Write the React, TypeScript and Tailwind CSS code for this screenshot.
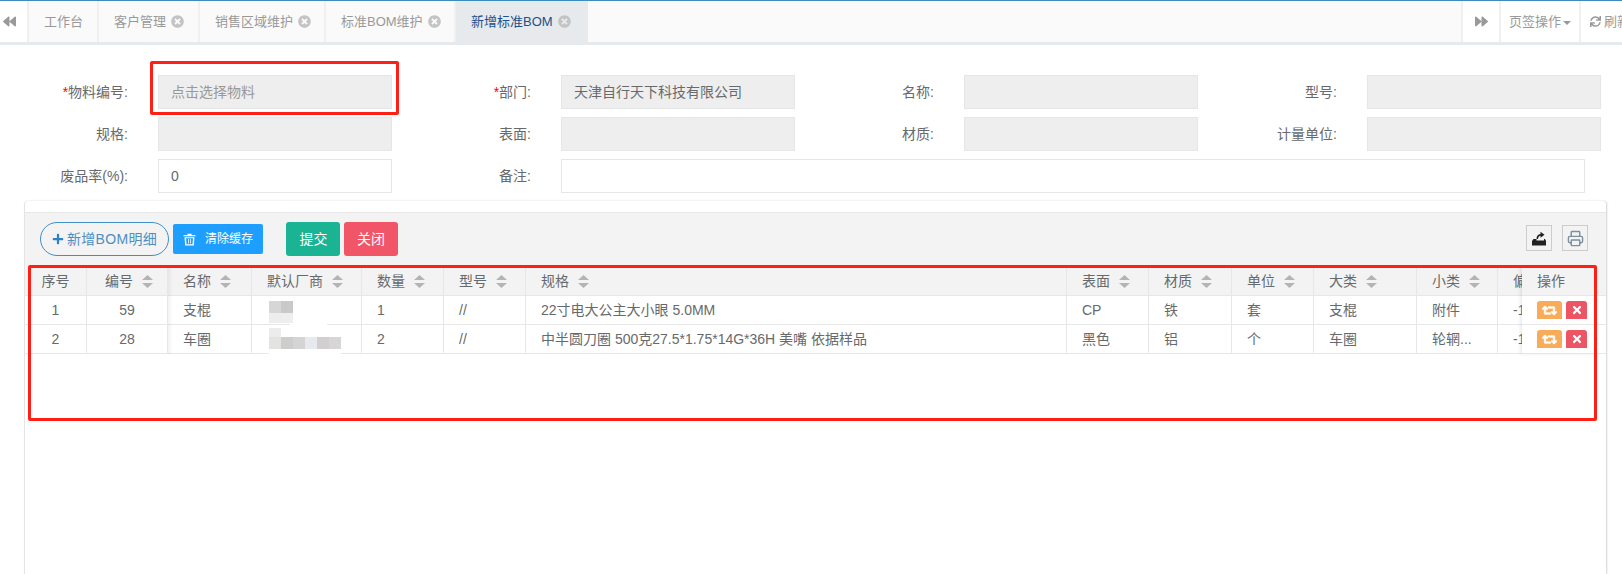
import { FaBackward, FaForward, FaPlus, FaRetweet, FaSync, FaTimes, FaTimesCircle } from "react-icons/fa";
import { Printer } from "lucide-react";

const tabs = [
  { name: "工作台", width: "w-[70px]", closable: false },
  { name: "客户管理", width: "w-[101px]", closable: true },
  { name: "销售区域维护", width: "w-[126px]", closable: true },
  { name: "标准BOM维护", width: "w-[130px]", closable: true },
];

const columns = [
  { title: "序号", width: 62, center: true, sort: false },
  { title: "编号", width: 81, center: true, sort: true },
  { title: "名称", width: 84, sort: true },
  { title: "默认厂商", width: 110, sort: true },
  { title: "数量", width: 82, sort: true },
  { title: "型号", width: 82, sort: true },
  { title: "规格", width: 541, sort: true },
  { title: "表面", width: 82, sort: true },
  { title: "材质", width: 83, sort: true },
  { title: "单位", width: 82, sort: true },
  { title: "大类", width: 103, sort: true },
  { title: "小类", width: 81, sort: true },
  { title: "偏差", width: 108, sort: false },
];

const rows = [
  ["1", "59", "支棍", "", "1", "//", "22寸电大公主大小眼 5.0MM", "CP", "铁", "套", "支棍", "附件", "-1"],
  ["2", "28", "车圈", "", "2", "//", "中半圆刀圈 500克27.5*1.75*14G*36H 美嘴 依据样品", "黑色", "铝", "个", "车圈", "轮辋...", "-1"],
];

function Field({ label, required, value, placeholder, editable }: { label: string; required?: boolean; value?: string; placeholder?: string; editable?: boolean }) {
  return (
    <div className="flex items-center">
      <label className="w-[100px] text-right text-[14px] leading-none text-[#676a6c]">
        {required && <span className="text-[#ff0000]">*</span>}
        {label}:
      </label>
      <div
        className={`ml-[30px] flex h-[34px] w-[234px] items-center border border-[#e5e6e7] px-3 text-[14px] ${
          editable ? "bg-white" : "bg-[#eeeeee]"
        } ${placeholder ? "text-[#999999]" : "text-[#676a6c]"}`}
      >
        {value || placeholder}
      </div>
    </div>
  );
}

function SortCaret() {
  return (
    <svg width="11" height="13" viewBox="0 0 11 13" className="ml-[9px] shrink-0">
      <path d="M5.5 0 L11 5 L0 5 Z M0 8 L11 8 L5.5 13 Z" fill="#b4b4b4" />
    </svg>
  );
}

function ExportIcon() {
  return (
    <svg width="14" height="15" viewBox="0 0 14 15">
      <path d="M0 14.5 V10 L1.5 8 H4.5 V9.5 H12 V8 H13 L14 10 V14.5 Z" fill="#222222" />
      <path d="M4.5 8 C4.5 5 5.8 3.3 8.5 3 V0.8 L12.5 3.8 L8.5 6.8 V4.8 C7 5 6.2 6 6 8 Z" fill="#222222" />
    </svg>
  );
}

function TrashIcon() {
  return (
    <svg width="13" height="13" viewBox="0 0 13 13" className="mr-[9px] shrink-0">
      <path d="M0.5 2 H4.5 V0.7 H8.5 V2 H12.5 V3.3 H0.5 Z" fill="#ffffff" />
      <path d="M1.5 4.3 H11.5 L10.8 12.5 H2.2 Z M3 5.3 L3.5 11.3 H9.5 L10 5.3 Z" fill="#ffffff" fillRule="evenodd" />
      <path d="M5 6 H5.8 V10.6 H5 Z M7.2 6 H8 V10.6 H7.2 Z" fill="#ffffff" />
    </svg>
  );
}

export default function App() {
  return (
    <div className="relative h-[574px] w-[1622px] overflow-hidden bg-white font-['Liberation_Sans','Noto_Sans_CJK_SC',sans-serif]">
      <div className="flex h-[45px] border-t border-t-[#3c8dbc] border-b-[3px] border-b-[#e7eaec] bg-[#fafafa] text-[13px] text-[#999999]">
        <div className="flex w-[29px] shrink-0 items-center border-r-2 border-[#f0f0f0] bg-white pl-[3px] text-[#999999]">
          <FaBackward size={13} />
        </div>
        {tabs.map((tab) => (
          <div key={tab.name} className={`flex shrink-0 items-center border-r-2 border-[#f0f0f0] pl-[15px] ${tab.width}`}>
            {tab.name}
            {tab.closable && <FaTimesCircle size={13} className="ml-[5px] text-[#c4c4c4]" />}
          </div>
        ))}
        <div className="flex w-[132px] shrink-0 items-center bg-[#e7eaec] pl-[15px] text-[#20508c]">
          新增标准BOM
          <FaTimesCircle size={13} className="ml-[5px] text-[#c4c4c4]" />
        </div>
        <div className="flex-1" />
        <div className="flex w-[40px] shrink-0 items-center justify-center border-x-2 border-[#f0f0f0] bg-white">
          <FaForward size={13} />
        </div>
        <div className="flex w-[80px] shrink-0 items-center justify-center border-r-2 border-[#f0f0f0] bg-white">
          页签操作
          <span className="ml-[2px] mt-[2px] border-x-[4px] border-t-[4px] border-x-transparent border-t-[#999999]" />
        </div>
        <div className="flex max-w-[41px] flex-1 items-center overflow-hidden whitespace-nowrap bg-white pl-[9px]">
          <FaSync size={11} className="mr-[3px] shrink-0" />
          刷新
        </div>
      </div>

      <div className="grid grid-cols-[repeat(4,403px)] gap-y-2 pl-[28px] pt-[30px]">
        <Field label="物料编号" required placeholder="点击选择物料" />
        <Field label="部门" required value="天津自行天下科技有限公司" />
        <Field label="名称" />
        <Field label="型号" />
        <Field label="规格" />
        <Field label="表面" />
        <Field label="材质" />
        <Field label="计量单位" />
        <Field label="废品率(%)" value="0" editable />
        <div className="col-span-3 flex items-center">
          <label className="w-[100px] text-right text-[14px] leading-none text-[#676a6c]">备注:</label>
          <div className="ml-[30px] h-[34px] w-[1024px] border border-[#e5e6e7] bg-white" />
        </div>
      </div>

      <div className="ml-[24px] mt-2 h-[373px] w-[1582px] rounded-t-[4px] border-l border-[#e4e4e4] bg-white shadow-[1px_0_2px_rgba(0,0,0,0.18)]">
        <div className="h-[11px]" />
        <div className="flex h-[55px] items-start border-t border-[#e7e7e7] bg-[#f3f3f3] pl-[15px] pr-[18px] pt-[9px]">
          <button className="flex h-[34px] w-[129px] items-center justify-center rounded-full border border-[#3f8fc9] text-[14px] tracking-[0.3px] text-[#4b8fc2]">
            <FaPlus size={12} className="mr-[3px] text-[#2b83c5]" />
            新增BOM明细
          </button>
          <button className="ml-[4px] mt-[2px] flex h-[30px] w-[90px] items-center justify-center rounded-[2px] bg-[#1e9fff] text-[12px] text-white">
            <TrashIcon />
            清除缓存
          </button>
          <button className="ml-[23px] h-[34px] w-[54px] rounded-[3px] bg-[#1ab394] pl-[1px] text-[14px] text-white">提交</button>
          <button className="ml-[4px] h-[34px] w-[54px] rounded-[3px] bg-[#f05668] text-[14px] text-white">关闭</button>
          <button className="ml-auto mt-[3px] flex h-[26px] w-[26px] items-center justify-center border border-[#cccccc]">
            <ExportIcon />
          </button>
          <button className="ml-[10px] mt-[3px] flex h-[26px] w-[26px] items-center justify-center border border-[#cccccc]">
            <Printer size={17} strokeWidth={2} className="text-[#7d8e9d]" />
          </button>
        </div>

        <div className="relative">
          <table className="w-[1581px] table-fixed border-separate border-spacing-0 text-[14px] text-[#676a6c]">
            <colgroup>
              {columns.map((col) => (
                <col key={col.title} style={{ width: col.width }} />
              ))}
            </colgroup>
            <thead>
              <tr>
                {columns.map((col) => (
                  <th key={col.title} className="h-[29px] overflow-hidden border-b border-r border-[#e7e7e7] bg-[#f3f3f3] px-[15px] font-normal last:border-r-0">
                    <div className={`flex items-center whitespace-nowrap ${col.center ? "justify-center" : ""} ${col.center && col.sort ? "pl-[4px]" : ""}`}>
                      {col.title}
                      {col.sort && <SortCaret />}
                    </div>
                  </th>
                ))}
              </tr>
            </thead>
            <tbody>
              {rows.map((row) => (
                <tr key={row[0]}>
                  {row.map((cell, i) => (
                    <td
                      key={i}
                      className={`h-[29px] overflow-hidden whitespace-nowrap border-b border-r border-[#e7e7e7] px-[15px] last:border-r-0 ${
                        columns[i].center ? "text-center" : ""
                      }`}
                    >
                      {cell}
                    </td>
                  ))}
                </tr>
              ))}
            </tbody>
          </table>

          {/* left fixed column shadow */}
          <div className="absolute left-[143px] top-0 h-[87px] w-[5px] bg-gradient-to-r from-[rgba(0,0,0,0.05)] to-transparent" />

          {/* blurred vendor names */}
          <div className="absolute left-[230px] top-[31px] h-[25px] w-[50px] rounded-[12px] bg-white/90" />
          <div className="absolute left-[265px] top-[46px] h-[25px] w-[37px] rounded-[10px] bg-white" />
          <div className="absolute left-[237px] top-[61px] h-[27px] w-[86px] rounded-[13px] bg-white" />
          <div className="absolute left-[244px] top-[34px] flex flex-col">
            <div className="flex">
              <div className="h-[12px] w-[12px] bg-[#d6d6d6]" />
              <div className="h-[12px] w-[12px] bg-[#cbc9c7]" />
            </div>
            <div className="flex">
              <div className="h-[10px] w-[12px] bg-[#ededed]" />
              <div className="h-[10px] w-[12px] bg-[#eeeeee]" />
            </div>
          </div>
          <div className="absolute left-[244px] top-[61px] flex flex-col">
            <div className="h-[9px] w-[12px] bg-[#ececec]" />
            <div className="flex">
              <div className="h-[12px] w-[12px] bg-[#e3e3e1]" />
              <div className="h-[12px] w-[12px] bg-[#cfcccc]" />
              <div className="h-[12px] w-[12px] bg-[#d4d4d4]" />
              <div className="h-[12px] w-[12px] bg-[#e6e9ee]" />
              <div className="h-[12px] w-[12px] bg-[#d1cfcf]" />
              <div className="h-[12px] w-[12px] bg-[#d6d6d6]" />
            </div>
          </div>

          {/* right fixed column */}
          <div className="absolute left-[1497px] top-0 w-[73px] bg-white text-[14px] text-[#676a6c] shadow-[-2px_0_3px_rgba(0,0,0,0.08)]">
            <div className="flex h-[29px] items-center border-b border-[#e7e7e7] bg-[#f3f3f3] pl-[15px]">操作</div>
            {[0, 1].map((i) => (
              <div key={i} className="flex h-[29px] items-center border-b border-[#e7e7e7] pl-[15px]">
                <span className="flex h-[18px] w-[25px] items-center justify-center rounded-t-[3px] bg-[#f8ac59] text-white">
                  <FaRetweet size={15} stroke="currentColor" strokeWidth={30} />
                </span>
                <span className="ml-[4px] flex h-[18px] w-[21px] items-center justify-center rounded-t-[3px] bg-[#ed5565] text-white">
                  <FaTimes size={12} />
                </span>
              </div>
            ))}
          </div>
        </div>
      </div>

      {/* red annotation boxes */}
      <div className="absolute left-[150px] top-[61px] h-[54px] w-[249px] rounded-[2px] border-[3px] border-[#ff2015]" />
      <div className="absolute left-[28px] top-[265px] h-[156px] w-[1569px] rounded-[2px] border-[3px] border-[#ff2015]" />
    </div>
  );
}
